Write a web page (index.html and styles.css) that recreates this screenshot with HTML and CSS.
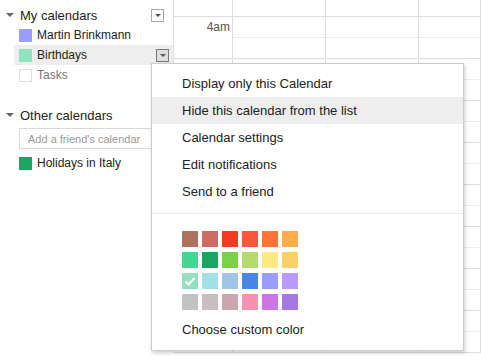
FILE: index.html
```html
<!DOCTYPE html>
<html lang="en">
<head>
    <meta charset="UTF-8">
    <title>Calendar list menu</title>
    <link rel="stylesheet" href="styles.css">
</head>
<body>

<div class="page">
    <aside class="sidebar">
        <div class="section-head">
            <span class="arrow"></span>
            <span class="section-title">My calendars</span>
            <span class="dd-btn"></span>
        </div>
        <div class="cal-row">
            <span class="swatch" style="background:#9a9cff"></span>
            <span class="cal-name">Martin Brinkmann</span>
        </div>
        <div class="cal-row active">
            <span class="swatch" style="background:#92e1c0"></span>
            <span class="cal-name">Birthdays</span>
            <span class="dd-btn pressed"></span>
        </div>
        <div class="cal-row">
            <span class="swatch empty"></span>
            <span class="cal-name muted">Tasks</span>
        </div>

        <div class="section-head other">
            <span class="arrow"></span>
            <span class="section-title">Other calendars</span>
        </div>
        <input class="friend-input" type="text" placeholder="Add a friend's calendar">
        <div class="cal-row">
            <span class="swatch" style="background:#16a765"></span>
            <span class="cal-name">Holidays in Italy</span>
        </div>
    </aside>

    <main class="grid-wrap">
        <div class="grid">
            <div class="hour"><span class="time"></span><span class="day"></span><span class="day"></span><span class="day"></span></div>
            <div class="hour"><span class="time">4am</span><span class="day"></span><span class="day"></span><span class="day"></span></div>
            <div class="hour"><span class="time">5am</span><span class="day"></span><span class="day"></span><span class="day"></span></div>
            <div class="hour"><span class="time"></span><span class="day"></span><span class="day"></span><span class="day"></span></div>
            <div class="hour"><span class="time"></span><span class="day"></span><span class="day"></span><span class="day"></span></div>
            <div class="hour"><span class="time"></span><span class="day"></span><span class="day"></span><span class="day"></span></div>
            <div class="hour"><span class="time"></span><span class="day"></span><span class="day"></span><span class="day"></span></div>
            <div class="hour"><span class="time"></span><span class="day"></span><span class="day"></span><span class="day"></span></div>
            <div class="hour"><span class="time"></span><span class="day"></span><span class="day"></span><span class="day"></span></div>
        </div>
    </main>

    <!-- menu opened from the Birthdays dropdown -->
    <div class="menu">
        <div class="menu-item">Display only this Calendar</div>
        <div class="menu-item hover">Hide this calendar from the list</div>
        <div class="menu-item">Calendar settings</div>
        <div class="menu-item">Edit notifications</div>
        <div class="menu-item">Send to a friend</div>
        <div class="menu-sep"></div>
        <div class="palette">
            <span class="chip" style="background:#ac725e"></span>
            <span class="chip" style="background:#d06b64"></span>
            <span class="chip" style="background:#f83a22"></span>
            <span class="chip" style="background:#fa573c"></span>
            <span class="chip" style="background:#ff7537"></span>
            <span class="chip" style="background:#ffad46"></span>
            <span class="chip" style="background:#42d692"></span>
            <span class="chip" style="background:#16a765"></span>
            <span class="chip" style="background:#7bd148"></span>
            <span class="chip" style="background:#b3dc6c"></span>
            <span class="chip" style="background:#fbe983"></span>
            <span class="chip" style="background:#fad165"></span>
            <span class="chip" style="background:#92e1c0">
                <svg width="16" height="16" viewBox="0 0 16 16"><path d="M3.5 8.5 L6.5 11.5 L12.5 5" fill="none" stroke="#fff" stroke-width="2.2"/></svg>
            </span>
            <span class="chip" style="background:#9fe1e7"></span>
            <span class="chip" style="background:#9fc6e7"></span>
            <span class="chip" style="background:#4986e7"></span>
            <span class="chip" style="background:#9a9cff"></span>
            <span class="chip" style="background:#b99aff"></span>
            <span class="chip" style="background:#c2c2c2"></span>
            <span class="chip" style="background:#cabdbf"></span>
            <span class="chip" style="background:#cca6ac"></span>
            <span class="chip" style="background:#f691b2"></span>
            <span class="chip" style="background:#cd74e6"></span>
            <span class="chip" style="background:#a47ae2"></span>
        </div>
        <div class="menu-item custom">Choose custom color</div>
    </div>
</div>

</body>
</html>
```

FILE: styles.css
```css
body {
    margin: 0;
    font-family: "Liberation Sans", Arial, sans-serif;
    color: #222;
    background: #fff;
}
.page {
    display: flex;
    height: 356px;
    overflow: hidden;
    position: relative;
}
.sidebar {
    width: 173px;
    flex-shrink: 0;
    padding-top: 5px;
}
.section-head {
    display: flex;
    align-items: center;
    height: 20px;
    padding-right: 9px;
}
.section-head.other {
    margin-top: 20px;
    margin-bottom: 3px;
}
.arrow {
    width: 0;
    height: 0;
    margin-left: 6px;
    border-left: 4px solid transparent;
    border-right: 4px solid transparent;
    border-top: 4px solid #666;
}
.section-title {
    font-size: 13px;
    margin-left: 6px;
    flex: 1;
}
.dd-btn {
    width: 11px;
    height: 11px;
    border: 1px solid #aaa;
    background: #fff;
    display: flex;
    align-items: center;
    justify-content: center;
}
.dd-btn::after {
    content: "";
    border-left: 3px solid transparent;
    border-right: 3px solid transparent;
    border-top: 3px solid #555;
}
.dd-btn.pressed {
    border-color: #777;
    background: #ddd;
}
.cal-row {
    display: flex;
    align-items: center;
    height: 20px;
    margin-left: 14px;
    width: 150px;
    padding-left: 5px;
    padding-right: 4px;
}
.cal-row.active {
    background: #eee;
}
.swatch {
    width: 13px;
    height: 13px;
    box-sizing: border-box;
    flex-shrink: 0;
}
.swatch.empty {
    border: 1px solid #ddd;
    background: #fff;
}
.cal-name {
    font-size: 12px;
    margin-left: 5px;
    flex: 1;
}
.cal-name.muted {
    color: #777;
}
.friend-input {
    display: block;
    margin: 0 0 4px 19px;
    width: 150px;
    height: 21px;
    box-sizing: border-box;
    border: 1px solid #d9d9d9;
    padding: 0 8px;
    font-family: inherit;
    font-size: 11px;
    outline: none;
}
.friend-input::placeholder {
    color: #999;
}
.grid-wrap {
    flex: 1;
    overflow: hidden;
}
.grid {
    margin-top: -25px;
}
.hour {
    display: grid;
    grid-template-columns: 60px 93px 93px 1fr;
    height: 42px;
    box-sizing: border-box;
    border-bottom: 1px solid #ddd;
}
.time {
    border-left: 1px solid #ddd;
    border-right: 1px solid #ddd;
    font-size: 12px;
    color: #555;
    text-align: right;
    padding: 3px 2px 0 0;
}
.day {
    border-right: 1px solid #ddd;
}
.day::after {
    content: "";
    display: block;
    margin-top: 20px;
    border-top: 1px dotted #ddd;
}
.menu {
    position: absolute;
    left: 151px;
    top: 63px;
    width: 311px;
    padding: 6px 0 7px;
    background: #fff;
    border: 1px solid #ccc;
    box-shadow: 1px 2px 4px rgba(0, 0, 0, 0.2);
}
.menu-item {
    height: 27px;
    line-height: 27px;
    padding-left: 30px;
    font-size: 13px;
    color: #222;
}
.menu-item.hover {
    background: #eee;
}
.menu-sep {
    margin: 8px 0 0;
    border-top: 1px solid #ebebeb;
}
.palette {
    display: grid;
    grid-template-columns: repeat(6, 16px);
    column-gap: 4px;
    row-gap: 5px;
    padding: 17px 0 0 30px;
}
.chip {
    width: 16px;
    height: 16px;
    display: block;
}
.chip svg {
    display: block;
}
.menu-item.custom {
    margin-top: 6px;
}
```
